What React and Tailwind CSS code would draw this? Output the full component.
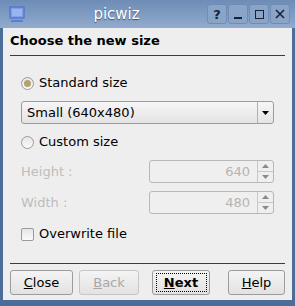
const font = { fontFamily: '"DejaVu Sans", Verdana, sans-serif' };

function TitleButton({ children }) {
  return (
    <div className="flex h-[20px] w-[20px] items-center justify-center rounded-[3px] border border-[#6f8cb4] bg-[#8aa4c8] text-[#15233a]">
      {children}
    </div>
  );
}

function Radio({ checked }) {
  return (
    <div className="flex h-[13px] w-[13px] items-center justify-center rounded-full border border-[#9a9a9a] bg-gradient-to-b from-[#e6e6e6] to-[#fafafa]">
      {checked ? <div className="h-[7px] w-[7px] rounded-full bg-[#b3a371]" /> : null}
    </div>
  );
}

function Spin({ value }) {
  return (
    <div className="flex h-[23px] w-[125px] rounded-[3px] border border-[#b8b8b8] bg-[#efefef]">
      <div className="flex flex-1 items-center justify-end pr-[7px] text-[13px] text-[#b4b4b4]">{value}</div>
      <div className="flex w-[16px] flex-col border-l border-[#c8c8c8]">
        <div className="flex flex-1 items-center justify-center border-b border-[#c8c8c8]">
          <svg width="7" height="4"><path d="M0 4 L3.5 0 L7 4 Z" fill="#8a8a8a" /></svg>
        </div>
        <div className="flex flex-1 items-center justify-center">
          <svg width="7" height="4"><path d="M0 0 L3.5 4 L7 0 Z" fill="#8a8a8a" /></svg>
        </div>
      </div>
    </div>
  );
}

function Button({ children, disabled, focus }) {
  return (
    <div
      className={`flex h-[25px] items-center justify-center rounded-[3px] border bg-gradient-to-b from-[#f4f4f4] to-[#e2e2e2] text-[13px] ${
        disabled ? "border-[#c6c6c6] text-[#a8a8a8]" : "border-[#9c9c9c] text-black"
      }`}
    >
      {focus ? (
        <div className="flex h-[19px] w-[51px] items-center justify-center border border-dotted border-black">
          {children}
        </div>
      ) : (
        children
      )}
    </div>
  );
}

export default function App() {
  return (
    <div className="flex h-[306px] w-[295px] flex-col bg-[#4d6d99]" style={font}>
      <div className="relative flex h-[28px] items-center bg-gradient-to-b from-[#6d8cb6] to-[#92abcd] px-[5px]">
        <svg width="18" height="17" viewBox="0 0 18 17" className="ml-[3px]">
          <rect x="2" y="1" width="14" height="11" fill="#7f9fe0" stroke="#3e66d8" />
          <rect x="4" y="3" width="10" height="7" fill="#9ab4ee" />
          <rect x="3" y="14" width="12" height="2" fill="#3e66d8" opacity="0.6" />
        </svg>
        <div className="flex-1 text-center text-[15px] text-white [text-shadow:0_1px_1px_#3c5270]">picwiz</div>
        <div className="flex gap-[1px]">
          <TitleButton>
            <span className="text-[13px] font-bold leading-none">?</span>
          </TitleButton>
          <TitleButton>
            <div className="mt-[8px] h-[2px] w-[8px] bg-[#15233a]" />
          </TitleButton>
          <TitleButton>
            <div className="h-[9px] w-[9px] border-[1.5px] border-[#15233a]" />
          </TitleButton>
          <TitleButton>
            <svg width="10" height="10"><path d="M1 1 L9 9 M9 1 L1 9" stroke="#15233a" strokeWidth="1.6" /></svg>
          </TitleButton>
        </div>
      </div>
      <div className="mx-[3px] mb-[6px] flex flex-1 flex-col bg-[#eeeeee] text-[13px] leading-[20px] text-black">
        <div className="px-[7px] pt-[5px] text-[13px] font-bold leading-[16px]">Choose the new size</div>
        <div className="mx-[7px] mt-[6px] h-px bg-[#3c3c3c]" />
        <div className="flex flex-col px-[18px] pt-[17px]">
          <div className="flex items-center gap-[5px]">
            <Radio checked />
            <span>Standard size</span>
          </div>
          <div className="mt-[8px] flex h-[23px] rounded-[3px] border border-[#9c9c9c] bg-gradient-to-b from-[#f6f6f6] to-[#e4e4e4]">
            <div className="flex flex-1 items-center pl-[5px]">Small (640x480)</div>
            <div className="flex w-[16px] items-center justify-center border-l border-[#b0b0b0]">
              <svg width="7" height="4"><path d="M0 0 L3.5 4 L7 0 Z" fill="#000" /></svg>
            </div>
          </div>
          <div className="mt-[8px] flex items-center gap-[5px]">
            <Radio />
            <span>Custom size</span>
          </div>
          <div className="mt-[8px] flex items-center justify-between text-[#bdbdbd]">
            <span>Height :</span>
            <Spin value="640" />
          </div>
          <div className="mt-[8px] flex items-center justify-between text-[#bdbdbd]">
            <span>Width :</span>
            <Spin value="480" />
          </div>
          <div className="mt-[10px] flex items-center gap-[5px]">
            <div className="h-[13px] w-[13px] rounded-[2px] border border-[#9a9a9a] bg-gradient-to-b from-[#e6e6e6] to-[#fafafa]" />
            <span>Overwrite file</span>
          </div>
        </div>
        <div className="mx-[7px] mt-auto h-px bg-[#3c3c3c]" />
        <div className="flex px-[7px] pb-[5px] pt-[6px]">
          <div className="w-[63px]">
            <Button>
              <span><span className="underline">C</span>lose</span>
            </Button>
          </div>
          <div className="ml-[6px] w-[60px]">
            <Button disabled>
              <span><span className="underline">B</span>ack</span>
            </Button>
          </div>
          <div className="ml-[13px] w-[58px]">
            <Button focus>
              <span className="font-bold"><span className="underline">N</span>ext</span>
            </Button>
          </div>
          <div className="ml-auto w-[57px]">
            <Button>
              <span><span className="underline">H</span>elp</span>
            </Button>
          </div>
        </div>
      </div>
    </div>
  );
}
